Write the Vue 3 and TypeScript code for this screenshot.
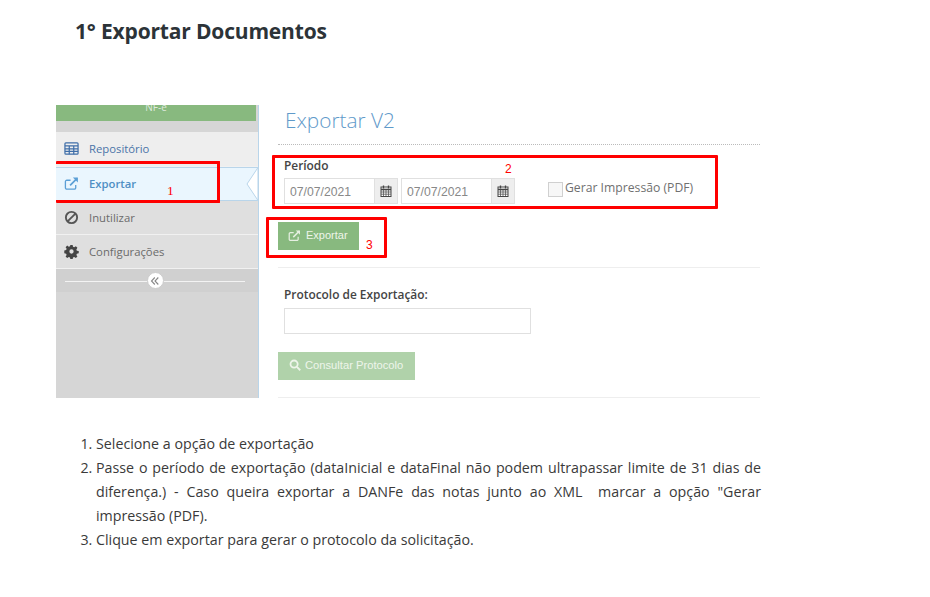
<script setup lang="ts">
const menu = [
  { label: 'Repositório', icon: 'table' },
  { label: 'Exportar', icon: 'export', active: true },
  { label: 'Inutilizar', icon: 'ban' },
  { label: 'Configurações', icon: 'gear' }
]
const dates = ['07/07/2021', '07/07/2021']
</script>

<template>
  <div class="page">
    <h2 class="title">1° Exportar Documentos</h2>

    <div class="shot">
      <aside class="sidebar">
        <div class="brand"><span>NF-e</span></div>
        <div class="menu">
          <div v-for="m in menu" :key="m.label" class="item" :class="{ active: m.active }">
            <svg class="ico" viewBox="0 0 16 16">
              <g v-if="m.icon === 'table'" fill="none" stroke="#3f6ea8" stroke-width="1.3">
                <rect x="1" y="2" width="14" height="12" rx="1" />
                <path d="M1 5.300h14M1 8.300h14M1 11.100h14M5.600 5.300V14M10.400 5.300V14" />
              </g>
              <g v-else-if="m.icon === 'export'" fill="none" stroke="#5b9fd6" stroke-width="1.400">
                <path d="M12.500 9.500v3a1.500 1.500 0 0 1-1.500 1.500H3a1.500 1.500 0 0 1-1.500-1.500V6A1.500 1.500 0 0 1 3 4.500h4" />
                <path d="M6.500 10 14 2.500" stroke-width="1.800" />
                <path d="M9.500 1.700h5.300v5.300z" fill="#5b9fd6" stroke="none" />
              </g>
              <g v-else-if="m.icon === 'ban'" fill="none" stroke="#555" stroke-width="2">
                <circle cx="8" cy="8" r="6" />
                <path d="M3.800 12.200l8.400-8.400" />
              </g>
              <path
                v-else
                fill="#444"
                d="M6.800 1h2.400l.4 2 1.300.5 1.700-1.100 1.700 1.700-1.100 1.700.5 1.300 2 .4v2.400l-2 .4-.5 1.300 1.100 1.700-1.700 1.700-1.700-1.100-1.300.5-.4 2H6.800l-.4-2-1.300-.5-1.700 1.100-1.700-1.700 1.100-1.700-.5-1.300-2-.4V6.800l2-.4.5-1.300-1.100-1.700 1.700-1.700 1.700 1.100 1.300-.5zM8 5.700a2.300 2.300 0 1 0 0 4.600 2.300 2.300 0 0 0 0-4.600z"
              />
            </svg>
            <span>{{ m.label }}</span>
            <svg v-if="m.active" class="notch" viewBox="0 0 12 34" width="12" height="34">
              <path d="M12 0.500 1 17 12 33.500z" fill="#fff" stroke="#b9d5ea" />
            </svg>
          </div>
        </div>
        <div class="collapse">
          <span class="collapse-btn">
            <svg viewBox="0 0 10 10" width="10" height="10" fill="none" stroke="#888" stroke-width="1.100">
              <path d="M4.800 1.500 1.500 5l3.300 3.500M8.300 1.500 5 5l3.300 3.500" />
            </svg>
          </span>
        </div>
      </aside>

      <main class="main">
        <h3 class="heading">Exportar V2</h3>
        <div class="dots"></div>

        <div class="period">
          <label class="lbl">Período</label>
          <div class="dates">
            <div v-for="(d, i) in dates" :key="i" class="date">
              <span class="date-val">{{ d }}</span>
              <span class="addon">
                <svg viewBox="0 0 12 12" width="12" height="12">
                  <rect x="1" y="2" width="10" height="9.500" fill="#fff" stroke="#444" />
                  <path d="M1 4.500h10" stroke="#444" stroke-width="1.600" />
                  <path d="M3.500.5v3M8.500.5v3" stroke="#444" stroke-width="1.300" />
                  <path d="M1 7h10M1 9.200h10M3.500 5v6M6 5v6M8.500 5v6" stroke="#555" stroke-width=".8" />
                </svg>
              </span>
            </div>
            <span class="check"></span>
            <span class="check-text">Gerar Impressão (PDF)</span>
          </div>
        </div>

        <button class="btn btn-export">
          <svg viewBox="0 0 16 16" width="13" height="13" fill="none" stroke="#e6f0e2" stroke-width="1.500">
            <path d="M12.500 9.500v3a1.500 1.500 0 0 1-1.500 1.500H3a1.500 1.500 0 0 1-1.500-1.500V6A1.500 1.500 0 0 1 3 4.500h4" />
            <path d="M6.500 10 14 2.500" stroke-width="1.800" />
            <path d="M9.500 1.700h5.300v5.300z" fill="#e6f0e2" stroke="none" />
          </svg>
          Exportar
        </button>
        <div class="rule rule-a"></div>

        <label class="lbl lbl-proto">Protocolo de Exportação:</label>
        <div class="proto-input"></div>

        <button class="btn btn-proto">
          <svg viewBox="0 0 16 16" width="12" height="12" fill="none" stroke="#eef5ea" stroke-width="2.400">
            <circle cx="6.800" cy="6.800" r="4.800" />
            <path d="M10.500 10.500 15 15" />
          </svg>
          Consultar Protocolo
        </button>
        <div class="rule rule-b"></div>
      </main>

      <div class="mark mark-1"></div>
      <div class="mark mark-2"></div>
      <div class="mark mark-3"></div>
      <span class="num num-1">1</span>
      <span class="num num-2">2</span>
      <span class="num num-3">3</span>
    </div>

    <ol class="steps">
      <li>Selecione a opção de exportação</li>
      <li>Passe o período de exportação (dataInicial e dataFinal não podem ultrapassar limite de 31 dias de diferença.) - Caso queira exportar a DANFe das notas junto ao XML&nbsp; marcar a opção "Gerar impressão (PDF).</li>
      <li>Clique em exportar para gerar o protocolo da solicitação.</li>
    </ol>
  </div>
</template>

<style>
html,
body {
  margin: 0;
  background: #fff;
}
</style>

<style scoped>
.page {
  width: 930px;
  height: 597px;
  overflow: hidden;
  font-family: 'Open Sans', 'Noto Sans', sans-serif;
  color: #333;
}

.title {
  margin: 0;
  padding: 17px 0 0 75px;
  font-size: 21px;
  line-height: 29px;
  font-weight: 700;
  color: #2c3338;
  letter-spacing: -0.17px;
}

.shot {
  position: relative;
  display: flex;
  width: 704px;
  height: 293px;
  margin: 59px 0 0 56px;
}

.sidebar {
  width: 203px;
  box-sizing: border-box;
  background: #d6d6d6;
  border-right: 1px solid #b9d5ea;
  flex-shrink: 0;
}

.brand {
  height: 16px;
  width: 200px;
  background: #88b97f;
  overflow: hidden;
  text-align: center;
  color: #dfe9dc;
  font-size: 10px;
  line-height: 4px;
}

.menu {
  margin-top: 11px;
  background: #dfdfdf;
}

.item {
  position: relative;
  display: flex;
  align-items: center;
  gap: 10px;
  height: 34px;
  padding-left: 8px;
  box-sizing: border-box;
  border-bottom: 1px solid #f1f1f1;
  font-size: 11.300px;
  color: #6b6b6b;
}

.item:first-child {
  height: 35px;
  padding-bottom: 2px;
  background: #eeeeee;
  color: #4b74a8;
}

.item.active {
  padding-bottom: 2px;
  background: #eaf6fe;
  color: #4f8fc4;
  font-weight: 600;
  border-bottom: 1px solid #b9d5ea;
  border-top: 1px solid #b9d5ea;
}

.ico {
  width: 15px;
  height: 15px;
  flex-shrink: 0;
}

.notch {
  position: absolute;
  right: 0;
  top: -1px;
}

.collapse {
  position: relative;
  height: 23px;
  background: #d0d0d0;
  display: flex;
  align-items: center;
  justify-content: center;
  padding-right: 4px;
}

.collapse::before {
  content: '';
  position: absolute;
  left: 9px;
  right: 13px;
  top: 12px;
  height: 1px;
  background: #f3f3f3;
}

.collapse-btn {
  position: relative;
  width: 17px;
  height: 17px;
  border-radius: 50%;
  background: #fff;
  border: 1px solid #ccc;
  box-sizing: border-box;
  display: flex;
  align-items: center;
  justify-content: center;
}

.main {
  flex: 1;
  position: relative;
}

.heading {
  margin: 0 0 0 26px;
  padding-top: 1px;
  font-size: 20.800px;
  line-height: 28px;
  font-weight: 300;
  color: #5f9aca;
}

.dots {
  margin: 10px 0 0 19px;
  border-top: 1px dotted #bbb;
}

.lbl {
  display: block;
  font-size: 11.900px;
  font-weight: 600;
  color: #444;
}

.period {
  margin: 12px 0 0 25px;
}

.period .lbl {
  line-height: 16px;
}

.dates {
  display: flex;
  align-items: center;
  margin-top: 5px;
  height: 26px;
}

.date {
  display: flex;
  height: 26px;
  box-sizing: border-box;
  border: 1px solid #e0e0e0;
  margin-right: 3px;
}

.date-val {
  width: 89px;
  padding: 1px 0 0 5px;
  box-sizing: border-box;
  font-family: 'Liberation Sans', Arial, sans-serif;
  font-size: 12.200px;
  line-height: 24px;
  color: #888;
}

.addon {
  width: 22px;
  background: #eeeeee;
  border-left: 1px solid #e0e0e0;
  display: flex;
  align-items: center;
  justify-content: center;
}

.check {
  width: 13px;
  height: 13px;
  margin: 0 0 4px 30px;
  background: #f7f7f7;
  border: 1px solid #d0d0d0;
}

.check-text {
  margin: 0 0 8px 2px;
  font-size: 12.200px;
  color: #707070;
}

.btn {
  display: flex;
  align-items: center;
  border: 0;
  font-family: 'Liberation Sans', Arial, sans-serif;
  font-size: 11px;
  color: #eef5ea;
}

.btn-export {
  width: 81px;
  height: 28px;
  margin: 18px 0 0 19px;
  padding: 0 0 2px 10px;
  gap: 5px;
  background: #88b97f;
}

.rule {
  margin-left: 19px;
  border-top: 1px solid #eee;
}

.rule-a {
  margin-top: 17px;
}

.lbl-proto {
  margin: 18px 0 0 25px;
  line-height: 16px;
}

.proto-input {
  width: 247px;
  height: 26px;
  box-sizing: border-box;
  margin: 6px 0 0 25px;
  border: 1px solid #e0e0e0;
}

.btn-proto {
  width: 137px;
  height: 28px;
  margin: 18px 0 0 19px;
  padding: 0 0 2px 11px;
  gap: 4px;
  background: #b0d2aa;
  font-size: 11.200px;
}

.rule-b {
  margin-top: 17px;
}

.mark {
  position: absolute;
  border: 3px solid #f00;
  box-sizing: border-box;
  border-radius: 1px;
}

.mark-1 {
  left: 0;
  top: 56px;
  width: 164px;
  height: 42px;
  border-left: 0;
}

.mark-2 {
  left: 216px;
  top: 50px;
  width: 446px;
  height: 54px;
}

.mark-3 {
  left: 210px;
  top: 112px;
  width: 121px;
  height: 41px;
}

.num {
  position: absolute;
  color: #f00;
  font-size: 12px;
  line-height: 14px;
}

.num-1 {
  left: 111px;
  top: 79px;
  font-size: 13.500px;
  font-family: 'Liberation Serif', serif;
}

.num-2 {
  left: 449px;
  top: 57px;
  font-family: 'Liberation Sans', sans-serif;
}

.num-3 {
  left: 310px;
  top: 133px;
  font-family: 'Liberation Sans', sans-serif;
}

.steps {
  width: 665px;
  margin: 34px 0 0 56px;
  padding: 0 0 0 40px;
  font-size: 14.240px;
  line-height: 24px;
  text-align: justify;
  color: #3a3a3a;
}
</style>
